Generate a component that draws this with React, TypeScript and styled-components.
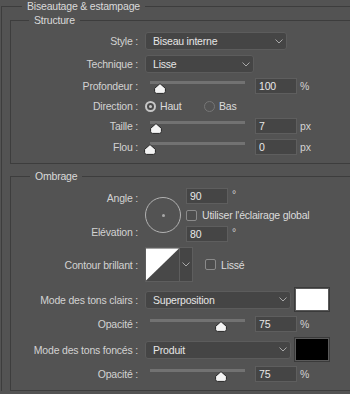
import React from "react";
import styled, { createGlobalStyle } from "styled-components";

const Global = createGlobalStyle`
  html, body { margin: 0; padding: 0; background: #535353; overflow: hidden; }
  body {
    width: 350px; height: 394px;
    font-family: "Liberation Sans", Arial, sans-serif;
    font-size: 10.5px; letter-spacing: -0.2px; color: #d2d2d2;
  }
  * { box-sizing: border-box; }
`;

const Panel = styled.fieldset`
  margin: 0 0 0 1px;
  padding: 1px 0 0 8px;
  border: 1px solid #3d3d3d;
  border-right: none;
  border-bottom: none;
  width: 380px;
  min-width: 0;
`;

const Legend = styled.legend<{ $offset: number }>`
  margin-left: ${p => p.$offset}px;
  padding: 0 5px;
  height: 13px;
  line-height: 13px;
  color: #dadada;
`;

const Group = styled.fieldset<{ $mt?: number }>`
  margin: ${p => p.$mt ?? 0}px 0 0 0;
  padding: 5px 0 8px 0;
  border: 1px solid #3d3d3d;
  border-right: none;
  min-width: 0;
`;

const Row = styled.div<{ $h: number; $mt?: number }>`
  display: grid;
  grid-template-columns: 134px 1fr;
  align-items: center;
  height: ${p => p.$h}px;
  margin-top: ${p => p.$mt ?? 0}px;
`;

const Label = styled.span<{ $shift?: number }>`
  text-align: right;
  padding-right: 7px;
  white-space: nowrap;
  color: #d2d2d2;
  transform: translateY(${p => p.$shift ?? 0}px);
`;

const Control = styled.div<{ $gap?: number }>`
  display: flex;
  align-items: center;
  gap: ${p => p.$gap ?? 0}px;
  height: 100%;
`;

const Select = styled.div<{ $w: number }>`
  width: ${p => p.$w}px;
  height: 18px;
  border: 1px solid #5c5c5c;
  border-radius: 3px;
  background: #454545;
  display: flex;
  align-items: center;
  justify-content: space-between;
  padding: 0 3px 0 7px;
  color: #e6e6e6;
`;

const ChevronSvg = styled.svg`
  display: block;
  flex: none;
`;

const Chevron = () => (
  <ChevronSvg width="8" height="5" viewBox="0 0 8 5">
    <path d="M0.5 0.5 L4 4 L7.5 0.5" fill="none" stroke="#a8a8a8" strokeWidth="1" />
  </ChevronSvg>
);

const SliderField = styled.div`
  display: flex;
  align-items: center;
  height: 16px;
`;

const Slider = styled.div`
  position: relative;
  width: 95px;
  height: 16px;
  margin-left: 5px;
  margin-right: 10px;
`;

const Track = styled.div`
  margin-top: 3px;
  height: 3px;
  background: #727272;
`;

const ThumbSvg = styled.svg`
  position: absolute;
  top: 5px;
  display: block;
`;

const Thumb = ({ frac }: { frac: number }) => (
  <ThumbSvg width="12" height="11" viewBox="0 0 12 11" style={{ left: `${frac * 95 - 6}px` }}>
    <path
      d="M6 0.6 L11.4 5.4 V8.4 Q11.4 10.4 9.4 10.4 H2.6 Q0.6 10.4 0.6 8.4 V5.4 Z"
      fill="#f4f4f4"
      stroke="#262626"
      strokeWidth="1"
    />
  </ThumbSvg>
);

const NumBox = styled.input`
  width: 42px;
  height: 16px;
  border: 1px solid #5e5e5e;
  background: #454545;
  color: #e8e8e8;
  font: inherit;
  letter-spacing: inherit;
  padding: 0 3px;
  margin: 0;
  outline: none;
  border-radius: 0;
`;

const Unit = styled.span`
  margin-left: 3px;
  color: #d2d2d2;
`;

const DegUnit = styled.span`
  margin-left: 4px;
  align-self: flex-start;
  color: #d2d2d2;
  line-height: 12px;
`;

const RadioOption = styled.label<{ $w?: number }>`
  display: flex;
  align-items: center;
  gap: 4px;
  width: ${p => (p.$w ? `${p.$w}px` : "auto")};
  color: #dcdcdc;
`;

const RadioMark = styled.span<{ $on: boolean }>`
  width: 11px;
  height: 11px;
  border-radius: 50%;
  display: flex;
  align-items: center;
  justify-content: center;
  border: ${p => (p.$on ? "2px solid #c6c6c6" : "1px solid #767676")};
  background: ${p => (p.$on ? "#4a4a4a" : "transparent")};
  &::after {
    content: "";
    display: ${p => (p.$on ? "block" : "none")};
    width: 3px;
    height: 3px;
    border-radius: 50%;
    background: #c6c6c6;
  }
`;

const CheckOption = styled.label<{ $ml?: number }>`
  display: flex;
  align-items: center;
  gap: 5px;
  margin-left: ${p => p.$ml ?? 0}px;
  color: #dcdcdc;
  white-space: nowrap;
`;

const CheckBox = styled.span`
  width: 11px;
  height: 11px;
  border: 1px solid #8a8a8a;
  border-radius: 2px;
  background: #4d4d4d;
`;

const AngleBlock = styled.div`
  display: grid;
  grid-template-columns: 134px 41px auto;
  grid-template-rows: 16px 22px 16px;
  align-items: center;
`;

const Dial = styled.div`
  grid-column: 2;
  grid-row: 1 / span 3;
  width: 36px;
  height: 36px;
  border-radius: 50%;
  border: 1px solid #b2b2b2;
  display: flex;
  align-items: center;
  justify-content: center;
  &::after {
    content: "";
    width: 3px;
    height: 3px;
    border-radius: 50%;
    background: #a8a8a8;
  }
`;

const Cell = styled.div<{ $row: number; $col: number }>`
  grid-row: ${p => p.$row};
  grid-column: ${p => p.$col};
  display: flex;
  align-items: center;
  height: 100%;
`;

const ContourPicker = styled.div`
  display: flex;
  height: 35px;
  border: 1px solid #5e5e5e;
  background: #454545;
`;

const ContourSwatch = styled.svg`
  display: block;
  border-right: 1px solid #5e5e5e;
`;

const ContourArrow = styled.div`
  width: 12px;
  display: flex;
  align-items: center;
  justify-content: center;
`;

const ColorSwatch = styled.div<{ $c: string }>`
  width: 36px;
  height: 25px;
  margin-left: 3px;
  background: ${p => p.$c};
  border: 1px solid #3a3a3a;
  outline: 1px solid #5a5a5a;
  outline-offset: -2px;
`;

const SliderRow = ({ label, frac, value, unit, mt }: { label: string; frac: number; value: string; unit: string; mt?: number }) => (
  <Row $h={16} $mt={mt}>
    <Label>{label}</Label>
    <SliderField>
      <Slider>
        <Track />
        <Thumb frac={frac} />
      </Slider>
      <NumBox readOnly value={value} />
      <Unit>{unit}</Unit>
    </SliderField>
  </Row>
);

const SelectRow = ({ label, w, value, mt, swatch }: { label: string; w: number; value: string; mt?: number; swatch?: string }) => (
  <Row $h={swatch ? 25 : 18} $mt={mt}>
    <Label>{label}</Label>
    <Control>
      <Select $w={w}>
        <span>{value}</span>
        <Chevron />
      </Select>
      {swatch && <ColorSwatch $c={swatch} />}
    </Control>
  </Row>
);

export default function App() {
  return (
    <>
      <Global />
      <Panel>
        <Legend $offset={12}>Biseautage &amp; estampage</Legend>
        <Group>
          <Legend $offset={18}>Structure</Legend>
          <SelectRow label="Style :" w={142} value="Biseau interne" />
          <SelectRow label="Technique :" w={109} value="Lisse" mt={5} />
          <SliderRow label="Profondeur :" frac={0.1} value="100" unit="%" mt={5} />
          <Row $h={14} $mt={5}>
            <Label>Direction :</Label>
            <Control>
              <RadioOption $w={59}>
                <RadioMark $on />
                Haut
              </RadioOption>
              <RadioOption>
                <RadioMark $on={false} />
                Bas
              </RadioOption>
            </Control>
          </Row>
          <SliderRow label="Taille :" frac={0.063} value="7" unit="px" mt={5} />
          <SliderRow label="Flou :" frac={0} value="0" unit="px" mt={5} />
        </Group>
        <Group $mt={6}>
          <Legend $offset={19}>Ombrage</Legend>
          <AngleBlock>
            <Cell $row={1} $col={1}>
              <Label $shift={2} style={{ width: "100%" }}>Angle :</Label>
            </Cell>
            <Dial />
            <Cell $row={1} $col={3}>
              <NumBox readOnly value="90" />
              <DegUnit>°</DegUnit>
            </Cell>
            <Cell $row={2} $col={3}>
              <CheckOption>
                <CheckBox />
                Utiliser l'éclairage global
              </CheckOption>
            </Cell>
            <Cell $row={3} $col={1}>
              <Label $shift={-2} style={{ width: "100%" }}>Elévation :</Label>
            </Cell>
            <Cell $row={3} $col={3}>
              <NumBox readOnly value="80" />
              <DegUnit>°</DegUnit>
            </Cell>
          </AngleBlock>
          <Row $h={35} $mt={5}>
            <Label>Contour brillant :</Label>
            <Control>
              <ContourPicker>
                <ContourSwatch width="34" height="33" viewBox="0 0 34 33">
                  <rect width="34" height="33" fill="#484848" />
                  <polygon points="0,0 34,0 0,33" fill="#ffffff" />
                </ContourSwatch>
                <ContourArrow>
                  <Chevron />
                </ContourArrow>
              </ContourPicker>
              <CheckOption $ml={12}>
                <CheckBox />
                Lissé
              </CheckOption>
            </Control>
          </Row>
          <SelectRow label="Mode des tons clairs :" w={146} value="Superposition" mt={5} swatch="#ffffff" />
          <SliderRow label="Opacité :" frac={0.75} value="75" unit="%" mt={4} />
          <SelectRow label="Mode des tons foncés :" w={146} value="Produit" mt={5} swatch="#000000" />
          <SliderRow label="Opacité :" frac={0.75} value="75" unit="%" mt={4} />
        </Group>
      </Panel>
    </>
  );
}
